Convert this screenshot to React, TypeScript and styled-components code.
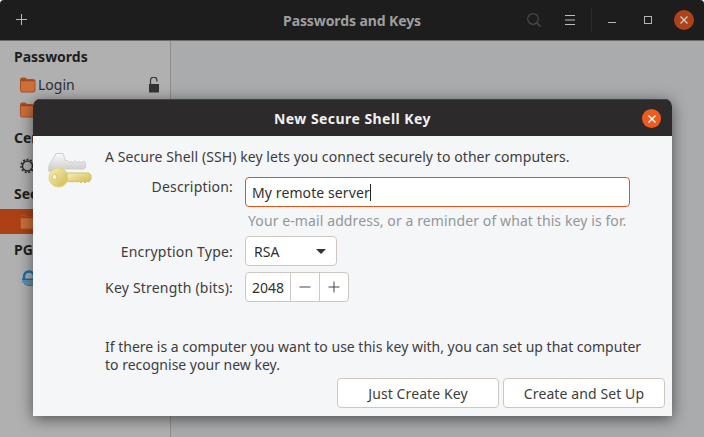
import styled, { createGlobalStyle } from "styled-components";

const Global = createGlobalStyle`
  html, body {
    margin: 0;
    padding: 0;
    width: 704px;
    height: 437px;
    overflow: hidden;
    background: #fff;
  }
  * {
    box-sizing: border-box;
  }
`;

const Win = styled.div`
  position: relative;
  width: 704px;
  height: 437px;
  overflow: hidden;
  display: flex;
  flex-direction: column;
  font-family: "Noto Sans", "Liberation Sans", sans-serif;
  font-size: 14px;
`;

const HeaderBar = styled.header`
  height: 41px;
  flex: none;
  background: #1d1d1d;
  border-bottom: 1px solid #6b6b6b;
  border-radius: 4px 4px 0 0;
  display: flex;
  align-items: center;
  padding: 0 10px 0 16px;
  color: #cfcfcf;
`;

const HeaderTitle = styled.div`
  flex: 1;
  text-align: center;
  font-size: 14px;
  font-weight: 700;
  letter-spacing: -0.1px;
  color: #9f9f9f;
  padding-left: 149px;
`;

const HeaderTools = styled.div`
  display: flex;
  align-items: center;
`;

const ToolIcon = styled.span<{ $mr?: number }>`
  display: flex;
  margin-right: ${(p) => p.$mr ?? 0}px;
`;

const Sep = styled.div`
  width: 1px;
  height: 24px;
  background: #2b2b2b;
  margin: 0 16px;
`;

const WinClose = styled.div`
  width: 20px;
  height: 20px;
  border-radius: 50%;
  background: #ae4218;
  display: flex;
  align-items: center;
  justify-content: center;
  margin-left: 22px;
`;

const Content = styled.div`
  flex: 1;
  display: flex;
`;

const Sidebar = styled.nav`
  width: 171px;
  background: #b0b0b0;
  border-right: 1px solid #8c8d8d;
  padding-top: 6px;
`;

const GroupLabel = styled.div<{ $mt?: number }>`
  font-size: 14px;
  font-weight: 700;
  line-height: 20px;
  color: #1e1e1e;
  padding-left: 14px;
  margin-top: ${(p) => p.$mt ?? 0}px;
  margin-bottom: 5px;
`;

const Item = styled.div<{ $selected?: boolean }>`
  height: 25px;
  display: flex;
  align-items: center;
  gap: 2px;
  padding: 0 10px 0 20px;
  color: #2a2d33;
  font-size: 14px;
  background: ${(p) => (p.$selected ? "#ad4115" : "transparent")};
`;

const Lock = styled.span`
  margin-left: auto;
  display: flex;
`;

const Main = styled.main`
  flex: 1;
  background: #a9abac;
`;

const Dialog = styled.section`
  position: absolute;
  left: 33px;
  top: 99px;
  width: 639px;
  height: 317px;
  border-radius: 7px 7px 0 0;
  background: #f5f6f7;
  box-shadow: 0 3px 15px rgba(0, 0, 0, 0.55);
  display: flex;
  flex-direction: column;
  color: #3d3d3d;
  overflow: hidden;
`;

const DialogBar = styled.div`
  height: 37px;
  flex: none;
  background: #2c2a2b;
  border-top: 1px solid #454344;
  display: flex;
  align-items: center;
  justify-content: center;
  position: relative;
  color: #f1f1f1;
  font-size: 14px;
  font-weight: 700;
  letter-spacing: 0.45px;
`;

const DialogClose = styled.div`
  position: absolute;
  right: 11px;
  top: 9px;
  width: 19px;
  height: 19px;
  border-radius: 50%;
  background: #ef5a1f;
  display: flex;
  align-items: center;
  justify-content: center;
`;

const DialogBody = styled.div`
  flex: 1;
  display: grid;
  grid-template-columns: 72px 1fr;
  padding: 0 7px 8px 0;
`;

const IconCell = styled.div`
  padding: 17px 0 0 15px;
`;

const Form = styled.div`
  display: flex;
  flex-direction: column;
`;

const Intro = styled.p`
  margin: 11px 0 0;
  line-height: 20px;
  font-size: 14px;
  letter-spacing: 0.08px;
  color: #3d3d3d;
`;

const Row = styled.div<{ $mt: number; $top?: boolean }>`
  display: flex;
  align-items: ${(p) => (p.$top ? "flex-start" : "center")};
  margin-top: ${(p) => p.$mt}px;
`;

const Label = styled.label`
  width: 128px;
  text-align: right;
  margin-right: 12px;
  font-size: 14px;
  line-height: 19px;
  letter-spacing: 0.2px;
  white-space: nowrap;
  color: #3d3d3d;
`;

const TextField = styled.div`
  width: 385px;
  height: 30px;
  border: 1px solid #e2541f;
  border-radius: 4px;
  background: #fff;
  display: flex;
  align-items: center;
  padding-left: 6px;
  font-size: 14px;
  letter-spacing: 0.1px;
  color: #303030;
`;

const Caret = styled.span`
  width: 1px;
  height: 17px;
  background: #222;
`;

const Hint = styled.div`
  margin: 4px 0 0 143px;
  line-height: 20px;
  font-size: 14px;
  letter-spacing: 0.1px;
  color: #929699;
`;

const Control = styled.div`
  height: 30px;
  border: 1px solid #cdc7c2;
  border-radius: 4px;
  background: #fff;
  display: flex;
  align-items: stretch;
  font-size: 14px;
  color: #303030;
`;

const Combo = styled(Control)`
  width: 92px;
  align-items: center;
  justify-content: space-between;
  padding: 0 10px 0 8px;
`;

const Arrow = styled.span`
  width: 0;
  height: 0;
  border-left: 5px solid transparent;
  border-right: 5px solid transparent;
  border-top: 5px solid #333;
`;

const SpinValue = styled.div`
  width: 44px;
  display: flex;
  align-items: center;
  justify-content: center;
`;

const SpinBtn = styled.div`
  width: 29px;
  border-left: 1px solid #cdc7c2;
  display: flex;
  align-items: center;
  justify-content: center;
`;

const Note = styled.p`
  margin: 36px 0 0;
  line-height: 18px;
  font-size: 14px;
  color: #3d3d3d;
`;

const Actions = styled.div`
  display: flex;
  justify-content: flex-end;
  gap: 4px;
  margin-top: auto;
`;

const Button = styled.button`
  width: 162px;
  height: 30px;
  border: 1px solid #cdc7c2;
  border-radius: 4px;
  background: #fff;
  font-family: inherit;
  font-size: 14px;
  letter-spacing: 0.1px;
  color: #3d3d3d;
  padding: 0;
`;

const Folder = () => (
  <svg width="16" height="16" viewBox="0 0 16 16">
    <path
      d="M.5 2.500A1.500 1.500 0 0 1 2 1h3.500L7 2.500h6.500A1.500 1.500 0 0 1 15 4v9.500a1.500 1.500 0 0 1-1.500 1.500H2a1.500 1.500 0 0 1-1.500-1.500z"
      fill="#cc7039"
      stroke="#a84f25"
    />
    <path d="M1 4.200V2.500C1 2 1.500 1.500 2 1.500h3.300l1.500 1.500h7C14.300 3 14.500 3.500 14.500 4.200z" fill="#a8431b" />
  </svg>
);

const Cross = ({ color, size = 8 }: { color: string; size?: number }) => (
  <svg width={size} height={size} viewBox="0 0 8 8">
    <path d="M.5.5l7 7M7.500.5l-7 7" stroke={color} strokeWidth="1.400" />
  </svg>
);

const Keys = () => (
  <svg width="44" height="36" viewBox="0 0 44 36">
    <defs>
      <linearGradient id="silver" x1="0" y1="0" x2="0" y2="1">
        <stop offset="0" stopColor="#fafafa" />
        <stop offset="1" stopColor="#c6c6c6" />
      </linearGradient>
      <linearGradient id="gold" x1="0" y1="0" x2="1" y2="1">
        <stop offset="0" stopColor="#f7efb8" />
        <stop offset="1" stopColor="#cfba4f" />
      </linearGradient>
    </defs>
    <path
      d="M.5 18C.5 11 3 9 5 6l3-5.500h7l2.500 7h2l2 2 1.500-1 2 1 2-2 2 2 2-1 2 1 3-1.500 1.500 1.500v5l-1.500 1.500H6v4z"
      fill="url(#silver)"
      stroke="#cfcfcf"
    />
    <circle cx="10.500" cy="24.500" r="9.500" fill="url(#gold)" stroke="#e0d587" />
    <path
      d="M19 20h22l2 2v4l-2 3-2-1-2 2-2-2-2 2-2-2-2 1-2-1-2 1-6-1z"
      fill="url(#gold)"
      stroke="#d1c163"
    />
    <circle cx="6.500" cy="24" r="2.500" fill="#fbf8df" stroke="#d3c474" />
  </svg>
);

const App = () => {
  return (
    <Win>
      <Global />
      <HeaderBar>
        <svg width="12" height="12" viewBox="0 0 12 12">
          <path d="M5.500 0v11M0 5.500h11" stroke="#b9b9b9" />
        </svg>
        <HeaderTitle>Passwords and Keys</HeaderTitle>
        <HeaderTools>
          <ToolIcon $mr={24}>
            <svg width="14" height="14" viewBox="0 0 14 14" fill="none">
              <circle cx="6" cy="6" r="5.300" stroke="#4a4a4a" strokeWidth="1.200" />
              <path d="M10 10l3.500 3.500" stroke="#4a4a4a" strokeWidth="1.500" />
            </svg>
          </ToolIcon>
          <ToolIcon>
            <svg width="10" height="10" viewBox="0 0 10 10">
              <path d="M0 .5h10M0 5h10M0 9.500h10" stroke="#bdbdbd" />
            </svg>
          </ToolIcon>
          <Sep />
          <ToolIcon $mr={28}>
            <svg width="8" height="8" viewBox="0 0 8 8">
              <path d="M0 6.500h8" stroke="#b5b5b5" />
            </svg>
          </ToolIcon>
          <ToolIcon>
            <svg width="8" height="8" viewBox="0 0 8 8">
              <rect x=".5" y=".5" width="7" height="7" fill="none" stroke="#b5b5b5" />
            </svg>
          </ToolIcon>
          <WinClose>
            <Cross color="#c9c9c9" />
          </WinClose>
        </HeaderTools>
      </HeaderBar>
      <Content>
        <Sidebar>
          <GroupLabel>Passwords</GroupLabel>
          <Item>
            <Folder />
            Login
            <Lock>
              <svg width="11" height="16" viewBox="0 0 11 16">
                <path d="M1.500 8V3.300a3.200 3.200 0 0 1 6.400 0V4.500" fill="none" stroke="#333" strokeWidth="1.200" />
                <rect x="0" y="7" width="10" height="8.500" fill="#333" />
              </svg>
            </Lock>
          </Item>
          <Item>
            <Folder />
          </Item>
          <GroupLabel $mt={6}>Certificates</GroupLabel>
          <Item>
            <svg width="16" height="16" viewBox="0 0 16 16" fill="none">
              <circle cx="7.500" cy="8" r="5" stroke="#2a2a2a" strokeWidth="1.400" />
              <circle cx="7.500" cy="8" r="6.500" stroke="#2a2a2a" strokeWidth="1.500" strokeDasharray="2 1.600" />
            </svg>
          </Item>
          <GroupLabel $mt={6}>Secure Shell</GroupLabel>
          <Item $selected>
            <Folder />
          </Item>
          <GroupLabel $mt={6}>PGP Keys</GroupLabel>
          <Item>
            <svg width="16" height="16" viewBox="0 0 16 16" fill="none">
              <path d="M4 9V6.500a5 5 0 0 1 10 0V9" stroke="#1a6fa8" strokeWidth="2.400" />
              <path d="M2 9.500h14" stroke="#1a6fa8" strokeWidth="2" />
              <path d="M2 12h14M4 14h12M6.500 15.800h8" stroke="#1a6fa8" strokeWidth="1.200" />
            </svg>
          </Item>
        </Sidebar>
        <Main />
      </Content>
      <Dialog>
        <DialogBar>
          New Secure Shell Key
          <DialogClose>
            <Cross color="#fff" />
          </DialogClose>
        </DialogBar>
        <DialogBody>
          <IconCell>
            <Keys />
          </IconCell>
          <Form>
            <Intro>A Secure Shell (SSH) key lets you connect securely to other computers.</Intro>
            <Row $mt={10} $top>
              <Label>Description:</Label>
              <TextField>
                My remote server
                <Caret />
              </TextField>
            </Row>
            <Hint>Your e-mail address, or a reminder of what this key is for.</Hint>
            <Row $mt={5}>
              <Label>Encryption Type:</Label>
              <Combo>
                RSA
                <Arrow />
              </Combo>
            </Row>
            <Row $mt={6}>
              <Label>Key Strength (bits):</Label>
              <Control>
                <SpinValue>2048</SpinValue>
                <SpinBtn>
                  <svg width="12" height="12" viewBox="0 0 12 12">
                    <path d="M.5 6h11" stroke="#444" />
                  </svg>
                </SpinBtn>
                <SpinBtn>
                  <svg width="12" height="12" viewBox="0 0 12 12">
                    <path d="M.5 6h11M6 .5v11" stroke="#444" />
                  </svg>
                </SpinBtn>
              </Control>
            </Row>
            <Note>
              If there is a computer you want to use this key with, you can set up that computer
              <br />
              to recognise your new key.
            </Note>
            <Actions>
              <Button>Just Create Key</Button>
              <Button>Create and Set Up</Button>
            </Actions>
          </Form>
        </DialogBody>
      </Dialog>
    </Win>
  );
};

export default App;
